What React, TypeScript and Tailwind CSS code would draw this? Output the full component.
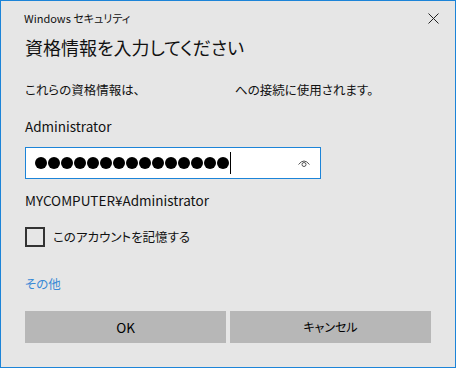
import React from "react";

const font = "font-['Noto_Sans_CJK_JP','Noto_Sans',sans-serif]";

export default function App() {
  const dots = Array.from({ length: 15 });
  return (
    <div
      className={`w-[456px] h-[368px] border border-[#1c84d8] bg-[#e6e6e6] flex flex-col text-[#111] ${font} [font-feature-settings:'palt']`}
    >
      <div className="flex items-center justify-between pl-[23px] pr-[16px] pt-[8px] h-[26px]">
        <span className="text-[11px] leading-[18px]">Windows セキュリティ</span>
        <svg width="11" height="11" viewBox="0 0 11 11">
          <path d="M0.5 0.5 L10.5 10.5 M10.5 0.5 L0.5 10.5" stroke="#222" strokeWidth="1" />
        </svg>
      </div>
      <div className="pl-[24px] mt-[6px] text-[18px] leading-[28px]">資格情報を入力してください</div>
      <div className="pl-[24px] mt-[19px] text-[12.5px] leading-[20px] flex">
        <span className="w-[210px]">これらの資格情報は、</span>
        <span>への接続に使用されます。</span>
      </div>
      <div className="pl-[24px] mt-[16px] text-[13.5px] leading-[20px]">Administrator</div>
      <div className="pl-[24px] mt-[11px]">
        <div className="w-[296px] h-[32px] border border-[#1c84d8] bg-white flex items-center pl-[9px] pr-[8px]">
          <div className="flex items-center">
            {dots.map((_, i) => (
              <span key={i} className="w-[12px] h-[12px] rounded-full bg-black mr-[1px]" />
            ))}
            <span className="w-[1px] h-[22px] bg-black" />
          </div>
          <svg width="14" height="10" viewBox="0 0 14 10" className="ml-auto mr-[1px]">
            <path d="M1.5 6.5 Q7 -0.5 12.5 6.5" stroke="#555" strokeWidth="1" fill="none" />
            <circle cx="7" cy="6.5" r="2" stroke="#555" strokeWidth="1" fill="none" />
          </svg>
        </div>
      </div>
      <div className="pl-[24px] mt-[11px] text-[13.5px] leading-[20px]">MYCOMPUTER¥Administrator</div>
      <div className="pl-[24px] mt-[17px] flex items-center">
        <span className="w-[20px] h-[20px] border-2 border-[#333]" />
        <span className="ml-[8px] text-[12.5px] leading-[20px]">このアカウントを記憶する</span>
      </div>
      <div className="pl-[24px] mt-[27px] text-[12.5px] leading-[20px] text-[#3a8ad6]">その他</div>
      <div className="pl-[24px] mt-[17px] flex gap-[4px]">
        <button className="w-[201px] h-[32px] bg-[#b7b7b7] text-[13.5px] text-black">OK</button>
        <button className="w-[201px] h-[32px] bg-[#b7b7b7] text-[12px] text-black">キャンセル</button>
      </div>
    </div>
  );
}
